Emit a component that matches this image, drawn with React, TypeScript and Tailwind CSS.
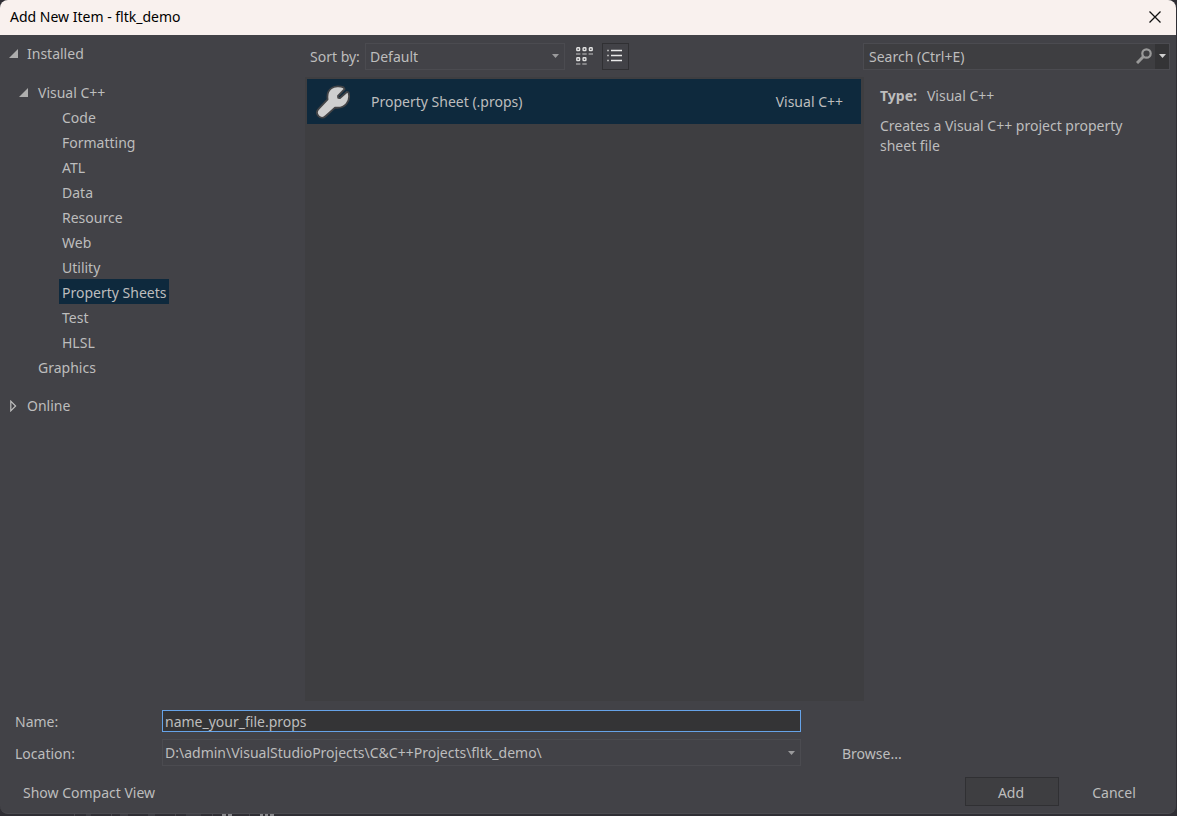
import React, { useState } from "react";

const languageItems = [
  "Code",
  "Formatting",
  "ATL",
  "Data",
  "Resource",
  "Web",
  "Utility",
  "Property Sheets",
  "Test",
  "HLSL",
];

function ExpandedArrow() {
  return (
    <svg className="size-[9px]" viewBox="0 0 9 9" aria-hidden="true">
      <path d="M9 0V9H0Z" fill="#aeaeae" />
    </svg>
  );
}

function CollapsedArrow() {
  return (
    <svg className="h-3 w-[7px]" viewBox="0 0 7 12" aria-hidden="true">
      <path d="M.8 1.2 5.6 6 .8 10.8Z" fill="none" stroke="#c0c0c0" strokeWidth="1.2" />
    </svg>
  );
}

function DownArrow({ color }: { color: string }) {
  return (
    <svg className="h-1 w-[7px]" viewBox="0 0 7 4" aria-hidden="true">
      <path d="M0 0H7L3.5 4Z" fill={color} />
    </svg>
  );
}

function CloseIcon() {
  return (
    <svg className="size-3" viewBox="0 0 12 12" aria-hidden="true">
      <path d="M.5.5 11.5 11.5M11.5.5.5 11.5" stroke="#111" strokeWidth="1.3" fill="none" />
    </svg>
  );
}

function TilesIcon() {
  const tiles = [
    [0, 0],
    [6.3, 0],
    [12.6, 0],
    [0, 10],
    [6.3, 10],
  ];
  return (
    <svg className="h-[18px] w-[17px]" viewBox="0 0 17 18" aria-hidden="true">
      {tiles.map(([x, y]) => (
        <g key={`${x}-${y}`}>
          <rect x={x + 0.8} y={y + 0.8} width="2.8" height="2.8" rx="0.6" fill="#55555a" stroke="#e0e0e0" strokeWidth="1.4" />
          <path d={`M${x} ${y + 7}h4.4`} stroke="#a0a0a2" strokeWidth="1.4" />
        </g>
      ))}
    </svg>
  );
}

function ListIcon() {
  return (
    <svg className="h-[13px] w-[15px]" viewBox="0 0 15 13" aria-hidden="true">
      <path d="M0 1.5H2M0 6.5H2M0 11.5H2" stroke="#b0b0b0" strokeWidth="1.3" />
      <path d="M4 1.5H15M4 6.5H15M4 11.5H15" stroke="#e8e8e8" strokeWidth="1.3" />
    </svg>
  );
}

function WrenchIcon() {
  return (
    <svg className="size-[34px]" viewBox="0 0 34 34" aria-hidden="true">
      <path
        d="M28.6 4.2 27.6 2.4C24 .8 18.5.9 15.2 3.4 11.8 6 10.9 9.6 11.6 14.3L2.6 23.8C.4 26.2.7 29.2 2.6 31.2 4.6 33.2 7.6 33.2 9.8 31L19 22.6C23.6 23.2 27.9 22 30.5 18.8 33 15.6 33.6 11 32.4 7.4L30.8 7 24 13 22.2 12.8 22 11Z"
        fill="#cfcfcf"
        stroke="#434447"
        strokeWidth="1.8"
        strokeLinejoin="round"
      />
    </svg>
  );
}

function SearchIcon() {
  return (
    <svg className="size-4" viewBox="0 0 16 16" aria-hidden="true">
      <circle cx="10.5" cy="5.5" r="4.2" fill="none" stroke="#999" strokeWidth="2.2" />
      <path d="M7.5 8.5 1 15" stroke="#999" strokeWidth="3" />
    </svg>
  );
}

function TemplateTree() {
  const [selected, setSelected] = useState("Property Sheets");
  return (
    <nav className="w-[305px] shrink-0 pt-1.5" aria-label="Templates">
      <button className="flex h-[25px] items-center gap-[9px] pl-[9px]">
        <ExpandedArrow />
        Installed
      </button>
      <button className="mt-[13px] flex h-[25px] items-center gap-[10px] pt-0.5 pl-[19px]">
        <ExpandedArrow />
        Visual C++
      </button>
      <ul className="pl-[59px]">
        {languageItems.map((item) => (
          <li key={item} className="flex">
            <button
              onClick={() => setSelected(item)}
              className={
                item === selected ? "h-[25px] bg-[#0e293d] px-[3px] pt-0.5" : "h-[25px] px-[3px] pt-0.5"
              }
            >
              {item}
            </button>
          </li>
        ))}
      </ul>
      <button className="block h-[25px] pt-0.5 pl-[38px]">Graphics</button>
      <button className="mt-[13px] flex h-[25px] items-center gap-[10px] pt-0.5 pl-[10px]">
        <CollapsedArrow />
        Online
      </button>
    </nav>
  );
}

function TemplateList() {
  return (
    <main className="flex min-w-0 flex-1 flex-col">
      <div className="flex h-[42px] items-center pl-[5px]">
        <label htmlFor="sort" className="w-[55px] pt-0.5 whitespace-nowrap">
          Sort by:
        </label>
        <div className="relative w-[200px]">
          <select
            id="sort"
            className="block h-[27px] w-full appearance-none border border-[#4b4b50] bg-[#424247] pt-0.5 pl-1 outline-none"
          >
            <option>Default</option>
          </select>
          <span className="pointer-events-none absolute inset-y-0 right-[6px] flex items-center">
            <DownArrow color="#9a9a9c" />
          </span>
        </div>
        <button aria-label="Medium icons" className="flex h-[27px] w-[37px] items-center justify-center pl-0.5">
          <TilesIcon />
        </button>
        <button
          aria-label="Small icons"
          className="flex h-[27px] w-[27px] items-center border border-[#303033] pb-0.5 pl-1"
        >
          <ListIcon />
        </button>
      </div>
      <div className="flex-1 bg-[#3e3e41] pt-0.5 pr-[3px] pl-0.5">
        <button className="flex h-[45px] w-full items-center bg-[#0e293d] pr-[18px] pl-[9px] text-left">
          <WrenchIcon />
          <span className="ml-[21px] flex-1">Property Sheet (.props)</span>
          <span>Visual C++</span>
        </button>
      </div>
    </main>
  );
}

function DetailsPane() {
  return (
    <aside className="-ml-px w-[313px] shrink-0 pr-[6px]">
      <div className="flex h-[42px] items-center">
        <div className="flex h-[27px] w-full items-center border border-[#4b4b50] bg-[#3e3e41]">
          <input
            aria-label="Search"
            placeholder="Search (Ctrl+E)"
            className="min-w-0 flex-1 bg-transparent pt-0.5 pl-[5px] outline-none placeholder:text-[#bdbdbd]"
          />
          <button aria-label="Run search" className="px-[3px]">
            <SearchIcon />
          </button>
          <button
            aria-label="Search options"
            className="flex h-full w-[14px] items-center justify-center bg-[#343436]"
          >
            <DownArrow color="#d0d0d0" />
          </button>
        </div>
      </div>
      <div className="pt-[9px] pr-7 pl-[17px]">
        <p className="leading-5">
          <b className="mr-[10px]">Type:</b>Visual C++
        </p>
        <p className="mt-[10px] leading-5">Creates a Visual C++ project property sheet file</p>
      </div>
    </aside>
  );
}

function ItemForm() {
  const [name, setName] = useState("name_your_file.props");
  return (
    <form className="pt-[9px]" onSubmit={(event) => event.preventDefault()}>
      <div className="grid grid-cols-[147px_1fr_375px] items-center gap-y-[7px] pl-[15px]">
        <label htmlFor="name" className="pt-0.5">
          Name:
        </label>
        <input
          id="name"
          value={name}
          onChange={(event) => setName(event.target.value)}
          className="h-[22px] min-w-0 border border-[#66a3e8] bg-[#343436] px-[2px] outline-none"
        />
        <span />
        <label htmlFor="location" className="pt-0.5">
          Location:
        </label>
        <div className="relative">
          <select
            id="location"
            className="block h-[27px] w-full appearance-none border border-[#4b4b50] bg-[#424247] px-[2px] outline-none"
          >
            <option>{"D:\\admin\\VisualStudioProjects\\C&C++Projects\\fltk_demo\\"}</option>
          </select>
          <span className="pointer-events-none absolute inset-y-0 right-[6px] flex items-center">
            <DownArrow color="#9a9a9c" />
          </span>
        </div>
        <button type="button" className="ml-[41px] justify-self-start pt-0.5">
          Browse...
        </button>
      </div>
      <div className="mt-[11px] flex h-[29px] items-center pr-[23px] pl-[23px]">
        <button type="button" className="pt-0.5">
          Show Compact View
        </button>
        <button type="submit" className="ml-auto h-full w-[94px] border border-[#303033] bg-[#3e3e41] pt-0.5 pr-0.5">
          Add
        </button>
        <button type="button" className="h-full w-[94px] pt-0.5 pl-4">
          Cancel
        </button>
      </div>
    </form>
  );
}

function EditorToolbarEdge() {
  return (
    <svg className="block h-0.5 w-[300px]" viewBox="0 0 300 2" aria-hidden="true">
      <path d="M74.5 0V2M111.5 0V2M175.5 0V2M212.5 0V2M249.5 0V2" stroke="#47464c" />
      <path d="M86 1h5M120 1h8M148 1h7M186 1h15" stroke="#4d4c52" />
      <path d="M222 1h4M228 1h4M260 1h3M265 1h3M270 1h4" stroke="#a5a5a8" strokeWidth="1.5" />
    </svg>
  );
}

export default function App() {
  return (
    <div className="flex min-h-screen flex-col bg-[#2f2e34] pr-px">
      <div className="flex flex-1 flex-col overflow-hidden rounded-lg border-b border-[#4b4b50] bg-[#424247] pb-[7px] font-['Noto_Sans',sans-serif] text-sm text-[#bdbdbd]">
        <header className="flex h-[35px] items-center bg-[#f9f1ee] pr-[15px] pb-0.5 pl-[10px] text-black">
          <h1 className="flex-1">Add New Item - fltk_demo</h1>
          <button aria-label="Close">
            <CloseIcon />
          </button>
        </header>
        <div className="flex flex-1">
          <TemplateTree />
          <TemplateList />
          <DetailsPane />
        </div>
        <ItemForm />
      </div>
      <EditorToolbarEdge />
    </div>
  );
}
